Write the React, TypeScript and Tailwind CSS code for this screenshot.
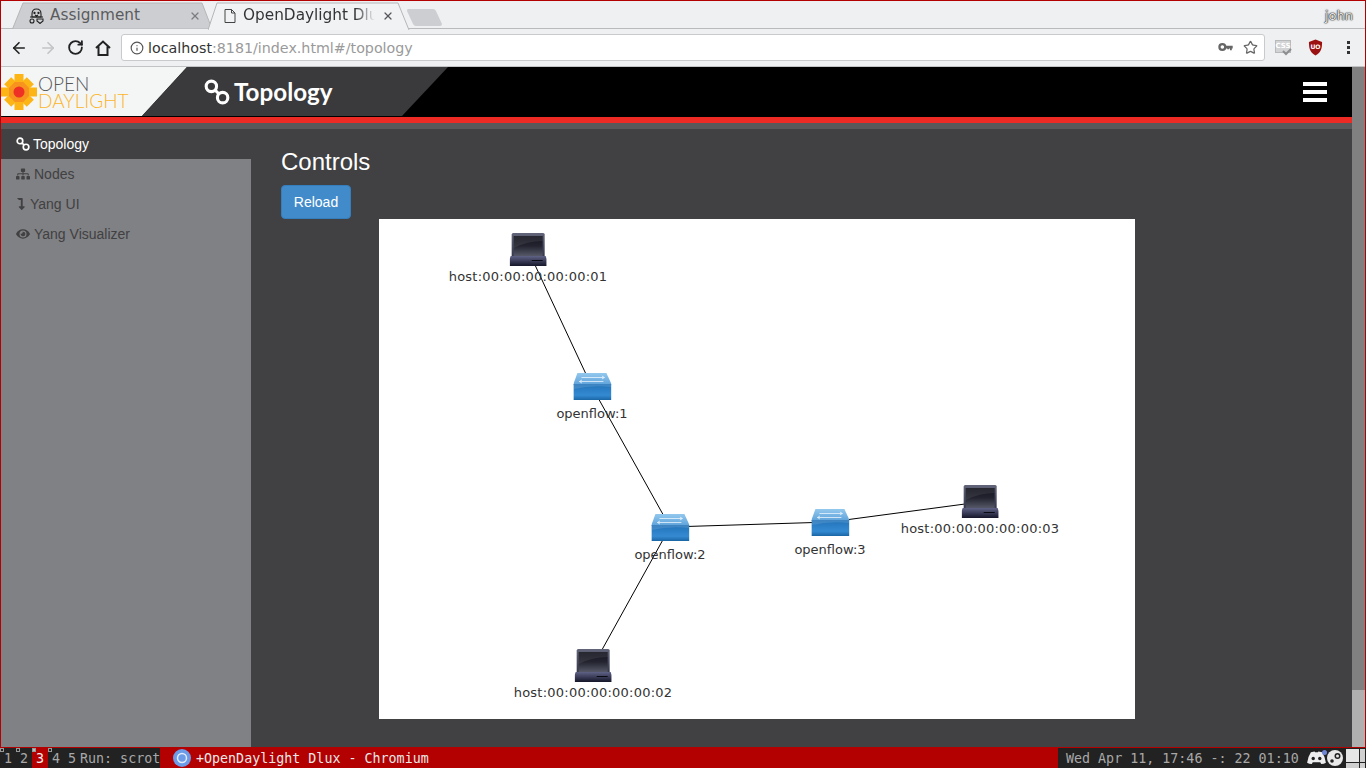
import { ArrowLeft, ArrowRight, Info, RotateCw, Star, X } from "lucide-react";
import { FaEye, FaLevelDownAlt, FaSitemap } from "react-icons/fa";

const SANS = "font-['DejaVu_Sans',sans-serif]";
const HELV = "font-['Liberation_Sans',Arial,sans-serif]";
const MONO = "font-['DejaVu_Sans_Mono',monospace]";

const LinkIcon = ({ className }: { className?: string }) => (
  <svg viewBox="0 0 30 30" className={className} fill="none" stroke="currentColor" strokeWidth="3.6">
    <circle cx="8.5" cy="8.5" r="6" />
    <circle cx="21.5" cy="21.5" r="6" />
    <path d="M13 13l4 4" />
  </svg>
);

const Flower = () => (
  <svg viewBox="0 0 36 36" className="h-[36px] w-[36px] shrink-0">
    <g fill="#fdb515">
      <rect x="13.5" y="0" width="9" height="36" />
      <rect x="0" y="13.5" width="36" height="9" />
      <rect x="13" y="2" width="10" height="32" transform="rotate(45 18 18)" />
      <rect x="13" y="2" width="10" height="32" transform="rotate(-45 18 18)" />
    </g>
    <g fill="#f7931e">
      <rect x="14" y="8" width="8" height="20" />
      <rect x="8" y="14" width="20" height="8" />
      <rect x="14" y="8" width="8" height="20" transform="rotate(45 18 18)" />
      <rect x="14" y="8" width="8" height="20" transform="rotate(-45 18 18)" />
    </g>
    <circle cx="18" cy="18" r="5.5" fill="#ee3124" />
  </svg>
);

const Laptop = () => (
  <svg viewBox="0 0 37 33" className="ml-[1px] h-[33px] w-[37px]">
    <defs>
      <linearGradient id="lid" x1="0" y1="0" x2="0" y2="1">
        <stop offset="0" stopColor="#62657a" />
        <stop offset="1" stopColor="#34364a" />
      </linearGradient>
      <linearGradient id="scr" x1="0" y1="0" x2="0" y2="1">
        <stop offset="0" stopColor="#14151e" />
        <stop offset="0.5" stopColor="#23242f" />
        <stop offset="1" stopColor="#565868" />
      </linearGradient>
      <linearGradient id="base" x1="0" y1="0" x2="0" y2="1">
        <stop offset="0" stopColor="#5f6285" />
        <stop offset="1" stopColor="#15162a" />
      </linearGradient>
    </defs>
    <path d="M2 1.5Q2 0 3.500 0h30Q35 0 35 1.500V24H2z" fill="url(#lid)" />
    <rect x="4" y="3" width="29" height="20" fill="url(#scr)" />
    <path d="M4 3h29v5Q18 8 4 15z" fill="#fff" opacity="0.08" />
    <path d="M1 23h35l1 3v7H0v-7z" fill="url(#base)" />
    <rect x="22" y="27" width="11" height="1" fill="#0a0a12" />
  </svg>
);

const Switch = () => (
  <svg viewBox="0 0 38 27" className="h-[27px] w-[38px]">
    <defs>
      <linearGradient id="swtop" x1="0" y1="0" x2="0" y2="1">
        <stop offset="0" stopColor="#93c8ee" />
        <stop offset="1" stopColor="#5da2da" />
      </linearGradient>
      <linearGradient id="swfront" x1="0" y1="0" x2="0" y2="1">
        <stop offset="0" stopColor="#2273b8" />
        <stop offset="0.7" stopColor="#348ad2" />
        <stop offset="1" stopColor="#1a66a6" />
      </linearGradient>
    </defs>
    <path d="M4 0h29l5 11v1H0v-1z" fill="url(#swtop)" />
    <rect x="0" y="11" width="38" height="16" fill="url(#swfront)" />
    <path d="M0 11h38v3Q18 12 0 16z" fill="#fff" opacity="0.12" />
    <path d="M8 4.500h23M6 8.500h24M28.500 3l2.500 1.500-2.500 1.500M8.500 7l-2.500 1.500 2.500 1.500" stroke="#e8f4fd" strokeWidth="0.8" fill="none" />
  </svg>
);

const nodes = [
  { id: 1, label: "host:00:00:00:00:00:01", pos: "left-[149px] top-[14px]", host: true },
  { id: 2, label: "openflow:1", pos: "left-[213px] top-[154px]", host: false },
  { id: 3, label: "openflow:2", pos: "left-[291px] top-[295px]", host: false },
  { id: 4, label: "openflow:3", pos: "left-[451px] top-[290px]", host: false },
  { id: 5, label: "host:00:00:00:00:00:03", pos: "left-[601px] top-[266px]", host: true },
  { id: 6, label: "host:00:00:00:00:00:02", pos: "left-[214px] top-[430px]", host: true },
];

const links = [
  [149, 31, 213, 168],
  [213, 168, 291, 308],
  [291, 308, 451, 303],
  [451, 303, 601, 283],
  [291, 308, 214, 447],
];

const Tabs = () => (
  <div className={`flex h-[28px] shrink-0 items-stretch border-b border-[#b9babc] bg-[#eef0f2] pl-[11px] pt-[1px] ${SANS}`}>
    <div className="relative w-[200px] text-[#5a5b5e]">
      <svg viewBox="0 0 200 27" className="absolute inset-0 h-[27px] w-[200px]">
        <path d="M0.5 27L11 1h179l10 26z" fill="#cdced1" stroke="#b5b6b8" />
      </svg>
      <div className="relative flex h-full items-center pl-[17px] pr-[11px] pt-[1px]">
        <svg viewBox="0 0 15 16" className="h-[16px] w-[15px] shrink-0" fill="none" stroke="#222" strokeWidth="1.1">
          <path d="M3 6Q3 1 7.500 1T12 6v3H3z" />
          <circle cx="5.500" cy="5" r="0.6" />
          <circle cx="9.500" cy="5" r="0.6" />
          <path d="M1 9h13M6 7l1.500 1L9 7" />
          <circle cx="3" cy="13" r="2" />
          <path d="M8 11h6v2l-3 2.500L8 13z" />
        </svg>
        <span className="ml-[6px] flex-1 text-[15.300px]">Assignment</span>
        <X className="h-[12px] w-[12px] text-[#7b7c7f]" strokeWidth={2.5} />
      </div>
    </div>
    <div className="relative z-10 -ml-[4px] w-[202px] text-[#333437]">
      <svg viewBox="0 0 202 28" className="absolute inset-x-0 top-0 h-[28px] w-[202px]">
        <path d="M0 28L9 1h181l11 27z" fill="#f1f2f4" />
        <path d="M0 28L9 1h181l11 27" fill="none" stroke="#b5b6b8" />
      </svg>
      <div className="relative flex h-full items-center pl-[16px] pr-[16px] pt-[1px]">
        <svg viewBox="0 0 12 14" className="h-[14px] w-[12px] shrink-0" fill="none" stroke="#444" strokeWidth="1">
          <path d="M1 .5h6.500L11 4v9.500H1zM7.500 .5V4H11" />
        </svg>
        <span className="ml-[7px] w-[132px] overflow-hidden whitespace-nowrap text-[15.300px] [mask-image:linear-gradient(to_right,black_85%,transparent)]">
          OpenDaylight Dlux
        </span>
        <X className="ml-[7px] h-[12px] w-[12px] text-[#55565a]" strokeWidth={2.5} />
      </div>
    </div>
    <div className="relative -ml-[4px] mt-[7px] h-[17px] w-[36px]">
      <svg viewBox="0 0 36 17" className="h-[17px] w-[36px]">
        <path d="M2 0h25q2 0 3 2l6 13q0 2-2 2H10q-2 0-3-2L1 2q0-2 1-2z" fill="#cdced1" />
      </svg>
    </div>
    <span className="ml-auto mr-[12px] mt-[1px] self-center text-[13px] leading-none text-[#e8e8e8] [text-shadow:0_0_1px_#222,0_0_1px_#222,0_0_2px_#444]">
      john
    </span>
  </div>
);

const Toolbar = () => (
  <div className="flex h-[38px] shrink-0 items-center border-b border-[#c2c3c5] bg-[#eef0f2] pl-[9px]">
    <ArrowLeft className="h-[18px] w-[18px] text-[#222]" strokeWidth={2.2} />
    <ArrowRight className="ml-[11px] h-[18px] w-[18px] text-[#c3c4c6]" strokeWidth={2.2} />
    <RotateCw className="ml-[10px] h-[17px] w-[17px] text-[#222]" strokeWidth={2.6} />
    <svg viewBox="0 0 16 16" className="ml-[11px] h-[16px] w-[16px]" fill="none" stroke="#222" strokeWidth="2">
      <path d="M1 8l7-6.500L15 8M3.500 6.500V15h9V6.500" />
    </svg>
    <div className={`ml-[10px] flex h-[27px] w-[1144px] items-center rounded-[3px] border border-[#c9cacc] bg-white pl-[8px] pr-[6px] text-[14.250px] ${SANS}`}>
      <Info className="h-[14px] w-[14px] text-[#555]" strokeWidth={2} />
      <span className="ml-[4px] pt-[2px] text-[#333]">localhost</span>
      <span className="pt-[2px] text-[#9a9a9a]">:8181/index.html#/topology</span>
      <svg viewBox="0 0 16 10" className="ml-auto h-[9px] w-[15px]" fill="#666">
        <path d="M4.500 0a4.500 4.500 0 1 1 0 9 4.500 4.500 0 0 1 0-9zm0 2.500a2 2 0 1 0 0 4 2 2 0 0 0 0-4zM8 3h8v3h-1v2h-2V6h-1v1h-2V6H8z" />
      </svg>
      <Star className="ml-[10px] h-[15px] w-[15px] text-[#666]" strokeWidth={2} />
    </div>
    <div className="relative ml-[10px] h-[16px] w-[17px]">
      <div className={`flex h-[13px] w-[16px] items-center justify-center border border-[#b8b9bb] bg-[#d2d3d5] text-[7px] font-bold leading-none text-white ${SANS}`}>
        CSS
      </div>
      <svg viewBox="0 0 10 8" className="absolute bottom-0 right-0 h-[8px] w-[10px]" fill="none" stroke="#8d8e90" strokeWidth="2">
        <path d="M1 3l3 3 5-5" />
      </svg>
    </div>
    <svg viewBox="0 0 16 17" className="ml-[16px] h-[17px] w-[15px]">
      <path d="M8 0l7 2.500c0 7-1 11-7 14.500C2 13.500 1 9.500 1 2.500z" fill="#9b1010" />
      <text x="8" y="10.500" textAnchor="middle" fontSize="6.500" fontWeight="700" fill="#fff" fontFamily="DejaVu Sans">
        UO
      </text>
    </svg>
    <div className="ml-[24px] flex flex-col gap-[2.500px]">
      <span className="h-[2.500px] w-[2.500px] bg-[#333]" />
      <span className="h-[2.500px] w-[2.500px] bg-[#333]" />
      <span className="h-[2.500px] w-[2.500px] bg-[#333]" />
    </div>
  </div>
);

const Header = () => (
  <div className="flex h-[50px] shrink-0 border-b border-black bg-black">
    <div className="flex w-[186px] items-center bg-[#f4f5f5] [clip-path:polygon(0_0,100%_0,141px_100%,0_100%)]">
      <Flower />
      <div className="ml-[1px] flex flex-col font-['Lato',sans-serif] font-light">
        <span className="text-[19px] leading-[17px] text-[#58585a]">OPEN</span>
        <span className="text-[19px] leading-[17px] text-[#fbb62b]">DAYLIGHT</span>
      </div>
    </div>
    <div className="-ml-[45px] flex w-[306px] items-center bg-[#3a3a3c] pl-[62px] text-white [clip-path:polygon(45px_0,100%_0,260px_100%,0_100%)]">
      <LinkIcon className="h-[26px] w-[26px]" />
      <span className="ml-[4px] pt-[1px] font-['Lato',sans-serif] text-[24.200px] font-bold">Topology</span>
    </div>
    <div className="ml-auto mr-[25px] flex w-[24px] flex-col justify-center gap-[4px]">
      <span className="h-[4px] bg-white" />
      <span className="h-[4px] bg-white" />
      <span className="h-[4px] bg-white" />
    </div>
  </div>
);

const Sidebar = () => (
  <div className={`flex w-[250px] shrink-0 flex-col bg-[#808184] text-[14px] text-[#414042] ${HELV}`}>
    <div className="flex h-[30px] items-center bg-[#414042] pl-[15px] text-white">
      <LinkIcon className="h-[14px] w-[14px]" />
      <span className="ml-[3px]">Topology</span>
    </div>
    <div className="flex h-[30px] items-center pl-[15px]">
      <FaSitemap className="h-[14px] w-[14px]" />
      <span className="ml-[4px]">Nodes</span>
    </div>
    <div className="flex h-[30px] items-center pl-[15px]">
      <FaLevelDownAlt className="h-[12px] w-[10px]" />
      <span className="ml-[4px]">Yang UI</span>
    </div>
    <div className="flex h-[30px] items-center pl-[15px]">
      <FaEye className="h-[14px] w-[14px]" />
      <span className="ml-[4px]">Yang Visualizer</span>
    </div>
  </div>
);

const Canvas = () => (
  <div className={`relative ml-[98px] h-[500px] w-[756px] bg-white ${SANS}`}>
    <svg viewBox="0 0 756 500" className="absolute inset-0 h-[500px] w-[756px]">
      {links.map(([x1, y1, x2, y2]) => (
        <line key={`${x1}-${x2}`} x1={x1} y1={y1} x2={x2} y2={y2} stroke="#000" strokeWidth="1" />
      ))}
    </svg>
    {nodes.map((n) => (
      <div key={n.id} className={`absolute flex -translate-x-1/2 flex-col items-center ${n.pos}`}>
        {n.host ? <Laptop /> : <Switch />}
        <span className={`whitespace-nowrap text-[13px] leading-[16px] text-[#333] ${n.host ? "mt-[3px] tracking-[0.23px]" : "mt-[6px]"}`}>
          {n.label}
        </span>
      </div>
    ))}
  </div>
);

const Workspace = ({ n, active }: { n: number; active?: boolean }) => (
  <span className={`relative w-[16px] text-center ${active ? "bg-[#b30000] text-[#eee]" : ""}`}>
    {n}
    {n < 5 && (
      <span className={`absolute left-0 top-0 h-[4px] w-[4px] border border-[#999] ${active ? "bg-[#bbb]" : ""}`} />
    )}
  </span>
);

const StatusBar = () => (
  <div className={`flex h-[20px] shrink-0 items-stretch bg-[#222] text-[13.330px] leading-[21px] text-[#a8a8a8] ${MONO}`}>
    <div className="flex">
      <Workspace n={1} />
      <Workspace n={2} />
      <Workspace n={3} active />
      <Workspace n={4} />
      <Workspace n={5} />
      <span className="w-[80px] whitespace-pre">Run: scrot</span>
    </div>
    <div className="flex w-[898px] items-center bg-[#b30000] pl-[13px] text-[#e8e8e8]">
      <svg viewBox="0 0 18 18" className="h-[18px] w-[18px]">
        <circle cx="9" cy="9" r="9" fill="#6c9be8" />
        <circle cx="9" cy="9" r="4.500" fill="none" stroke="#e4ecfa" strokeWidth="1.500" />
      </svg>
      <span className="ml-[5px]">+OpenDaylight Dlux - Chromium</span>
    </div>
    <span className="ml-[8px] w-[241px] whitespace-pre">Wed Apr 11, 17:46 -: 22 01:10</span>
    <div className="flex items-center">
      <div className="relative h-[16px] w-[20px]">
        <svg viewBox="0 0 20 16" className="h-[15px] w-[19px]" fill="#eee">
          <path d="M4 2.500Q7 1.500 8 1.500l.500 1h3l.500-1q1 0 4 1 3 4.500 4 11-2 1.500-5 1.500l-1-2H6l-1 2q-3 0-5-1.500 1-6.500 4-11z" />
          <circle cx="6.500" cy="9" r="1.800" fill="#222" />
          <circle cx="13.500" cy="9" r="1.800" fill="#222" />
        </svg>
        <span className="absolute right-0 top-0 h-[5px] w-[5px] rounded-full bg-[#6f86d6]" />
      </div>
      <svg viewBox="0 0 16 16" className="h-[16px] w-[16px]">
        <circle cx="8" cy="8" r="8" fill="#e8e8e8" />
        <circle cx="10.500" cy="6" r="3" fill="#222" />
        <circle cx="10.500" cy="6" r="1.500" fill="#e8e8e8" />
        <circle cx="5" cy="11" r="1.800" fill="#222" />
      </svg>
      <div className="ml-[3px] grid h-[19px] w-[19px] grid-cols-[13px_5px] grid-rows-[13px_5px] gap-[1px]">
        <span className="bg-[#e6e6e6]" />
        <span className="bg-[#d0d0d0]" />
        <span className="bg-[#d0d0d0]" />
        <span className="bg-[#d0d0d0]" />
      </div>
    </div>
  </div>
);

export default function App() {
  return (
    <div className="flex h-screen w-full flex-col overflow-hidden">
      <div className="flex min-h-0 flex-1 flex-col border border-[#b30000]">
        <Tabs />
        <Toolbar />
        <div className="flex min-h-0 flex-1">
          <div className="flex min-w-0 flex-1 flex-col">
            <Header />
            <div className="h-[6px] shrink-0 bg-[#ee2a24]" />
            <div className="h-[6px] shrink-0 bg-[#58585a]" />
            <div className="flex min-h-0 flex-1">
              <Sidebar />
              <main className={`flex-1 bg-[#414042] pl-[30px] pt-[20px] ${HELV}`}>
                <h1 className="text-[24px] leading-[26px] text-white">Controls</h1>
                <button className="mt-[10px] block h-[34px] w-[70px] rounded-[4px] border border-[#357ebd] bg-[#428bca] text-[14px] text-white">
                  Reload
                </button>
                <Canvas />
              </main>
            </div>
          </div>
          <div className="flex w-[13px] shrink-0 flex-col bg-[#b0b0b0]">
            <div className="h-[623px] bg-[#808080]" />
          </div>
        </div>
      </div>
      <StatusBar />
    </div>
  );
}
